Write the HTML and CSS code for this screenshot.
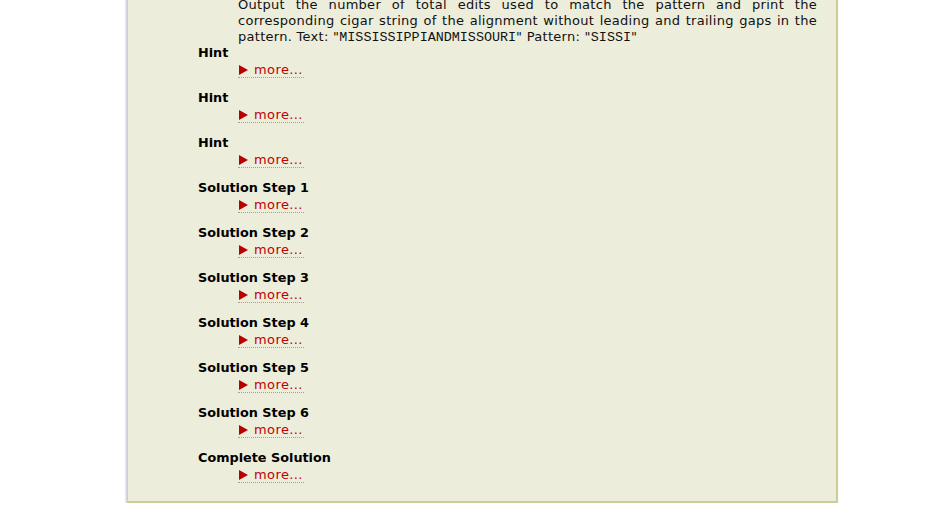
FILE: index.html
```html
<!DOCTYPE html>
<html>
<head>
<meta charset="utf-8">
<link rel="stylesheet" href="styles.css">
</head>
<body>
<div class="panel">
  <p class="task">Output the number of total edits used to match the pattern and print the corresponding cigar string of the alignment without leading and trailing gaps in the pattern. Text: "<code>MISSISSIPPIANDMISSOURI</code>" Pattern: "<code>SISSI</code>"</p>
  <dl class="steps">
    <dt>Hint</dt>
    <dd><a class="more" href="#"><span class="tri"></span>more...</a></dd>
    <dt>Hint</dt>
    <dd><a class="more" href="#"><span class="tri"></span>more...</a></dd>
    <dt>Hint</dt>
    <dd><a class="more" href="#"><span class="tri"></span>more...</a></dd>
    <dt>Solution Step 1</dt>
    <dd><a class="more" href="#"><span class="tri"></span>more...</a></dd>
    <dt>Solution Step 2</dt>
    <dd><a class="more" href="#"><span class="tri"></span>more...</a></dd>
    <dt>Solution Step 3</dt>
    <dd><a class="more" href="#"><span class="tri"></span>more...</a></dd>
    <dt>Solution Step 4</dt>
    <dd><a class="more" href="#"><span class="tri"></span>more...</a></dd>
    <dt>Solution Step 5</dt>
    <dd><a class="more" href="#"><span class="tri"></span>more...</a></dd>
    <dt>Solution Step 6</dt>
    <dd><a class="more" href="#"><span class="tri"></span>more...</a></dd>
    <dt>Complete Solution</dt>
    <dd><a class="more" href="#"><span class="tri"></span>more...</a></dd>
  </dl>
</div>
</body>
</html>
```
FILE: styles.css
```css
html, body {
  margin: 0;
  padding: 0;
  background: #ffffff;
}
body {
  font-family: "DejaVu Sans", Verdana, sans-serif;
  font-size: 13px;
  color: #111111;
}
.panel {
  margin-left: 127px;
  width: 708px;
  margin-top: -12px;
  background: #ededdb;
  border-left: 1px solid #d2d2b0;
  border-right: 2px solid #cccc9a;
  border-bottom: 2px solid #cccc9a;
  box-shadow: -1px 1px 2px rgba(120,120,150,0.45);
  padding: 0 0 6px 0;
}
.task {
  margin: 0 19px -1px 110px;
  padding-top: 9px;
  line-height: 16px;
  text-align: justify;
  letter-spacing: 0.28px;
  color: #111111;
}
.task code {
  font-family: "Liberation Mono", "Courier New", monospace;
  font-size: 13.4px;
  letter-spacing: 0;
}
.steps {
  margin: 0;
  padding: 0;
}
.steps dt {
  margin: 0 0 0 70px;
  font-weight: bold;
  font-size: 12.8px;
  line-height: 16px;
  color: #000;
}
.steps dd {
  margin: 1px 0 12px 110px;
  line-height: 15px;
}
.more {
  display: inline-block;
  color: #c00000;
  text-decoration: none;
  letter-spacing: 0.4px;
  border-bottom: 1px dotted #a0a0a0;
  padding-right: 1px;
}
.tri {
  display: inline-block;
  width: 0;
  height: 0;
  border-top: 5px solid transparent;
  border-bottom: 5px solid transparent;
  border-left: 9px solid #b80000;
  margin: 0 6px 0 1px;
  vertical-align: -1px;
}
```
